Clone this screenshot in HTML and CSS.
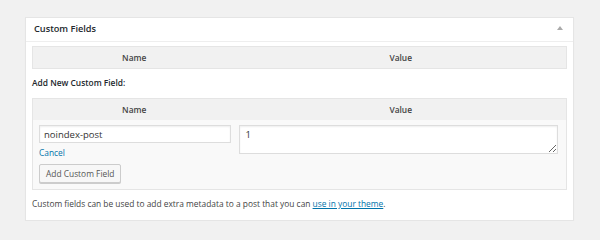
FILE: index.html
```html
<!DOCTYPE html>
<html lang="en">
<head>
    <meta charset="UTF-8">
    <title>Custom Fields</title>
    <link rel="stylesheet" href="styles.css">
</head>
<body>
    <div class="postbox">
        <div class="postbox-header">
            <h2>Custom Fields</h2>
            <span class="toggle-arrow"></span>
        </div>
        <div class="inside">
            <table class="meta-table">
                <thead>
                    <tr>
                        <th class="col-name">Name</th>
                        <th class="col-value">Value</th>
                    </tr>
                </thead>
            </table>

            <p class="add-title">Add New Custom Field:</p>

            <table class="meta-table new-meta">
                <thead>
                    <tr>
                        <th class="col-name">Name</th>
                        <th class="col-value">Value</th>
                    </tr>
                </thead>
                <tbody>
                    <tr>
                        <td class="cell-name">
                            <input type="text" class="meta-key" value="noindex-post">
                            <a href="#" class="cancel-link">Cancel</a>
                        </td>
                        <td class="cell-value">
                            <textarea class="meta-value">1</textarea>
                        </td>
                    </tr>
                    <tr>
                        <td colspan="2" class="submit-cell">
                            <button type="button" class="button">Add Custom Field</button>
                        </td>
                    </tr>
                </tbody>
            </table>

            <p class="help-text">Custom fields can be used to add extra metadata to a post that you can <a href="#">use in your theme</a>.</p>
        </div>
    </div>
</body>
</html>
```

FILE: styles.css
```css
body {
    margin: 0;
    padding: 17px 26px 0 25px;
    background: #f1f1f1;
    font-family: 'Open Sans', 'Liberation Sans', sans-serif;
    font-size: 8.4px;
    color: #444;
}
.postbox {
    background: #fff;
    border: 1px solid #e5e5e5;
    box-shadow: 0 1px 1px rgba(0, 0, 0, 0.04);
    height: 204px;
    box-sizing: border-box;
}
.postbox-header {
    display: flex;
    justify-content: space-between;
    align-items: center;
    height: 20px;
    padding: 0 10px 3px 8px;
    border-bottom: 1px solid #eee;
}
.postbox-header h2 {
    margin: 0;
    font-size: 9.2px;
    font-weight: 600;
    color: #23282d;
}
.toggle-arrow {
    width: 0;
    height: 0;
    border-left: 3px solid transparent;
    border-right: 3px solid transparent;
    border-bottom: 4px solid #aaa;
}
.inside {
    padding: 4px 6px 0 6px;
}
.meta-table {
    width: 100%;
    border-collapse: collapse;
    border: 1px solid #e5e5e5;
}
.meta-table th {
    background: #f1f1f1;
    font-weight: 600;
    color: #444;
    height: 21px;
    padding: 0;
    text-align: center;
}
.col-name {
    width: 38%;
}
.add-title {
    margin: 0;
    height: 29px;
    line-height: 27px;
    font-weight: 600;
    color: #23282d;
}
.new-meta tbody {
    background: #f9f9f9;
}
.new-meta td {
    vertical-align: top;
}
.cell-name {
    padding: 5px 4px 0 6px;
}
.cell-value {
    padding: 5px 8px 0 4px;
}
.meta-key {
    display: block;
    width: 100%;
    box-sizing: border-box;
    height: 18px;
    padding: 0 4px;
    border: 1px solid #ddd;
    font: inherit;
    font-size: 9.5px;
    color: #333;
    box-shadow: inset 0 1px 2px rgba(0, 0, 0, 0.07);
}
.meta-value {
    display: block;
    width: 100%;
    box-sizing: border-box;
    height: 29px;
    padding: 2px 5px;
    border: 1px solid #ddd;
    font: inherit;
    font-size: 9.5px;
    color: #333;
    box-shadow: inset 0 1px 2px rgba(0, 0, 0, 0.07);
}
.cancel-link {
    display: block;
    margin-top: 4px;
    color: #0073aa;
    text-decoration: none;
}
.submit-cell {
    padding: 6px 6px 6px 6px;
}
.button {
    height: 19px;
    padding: 0 6px;
    font: inherit;
    color: #555;
    background: #f7f7f7;
    border: 1px solid #ccc;
    border-radius: 2px;
    box-shadow: 0 1px 0 #ccc;
}
.help-text {
    margin: 8px 0 0 0;
    color: #444;
}
.help-text a {
    color: #0073aa;
}
```
